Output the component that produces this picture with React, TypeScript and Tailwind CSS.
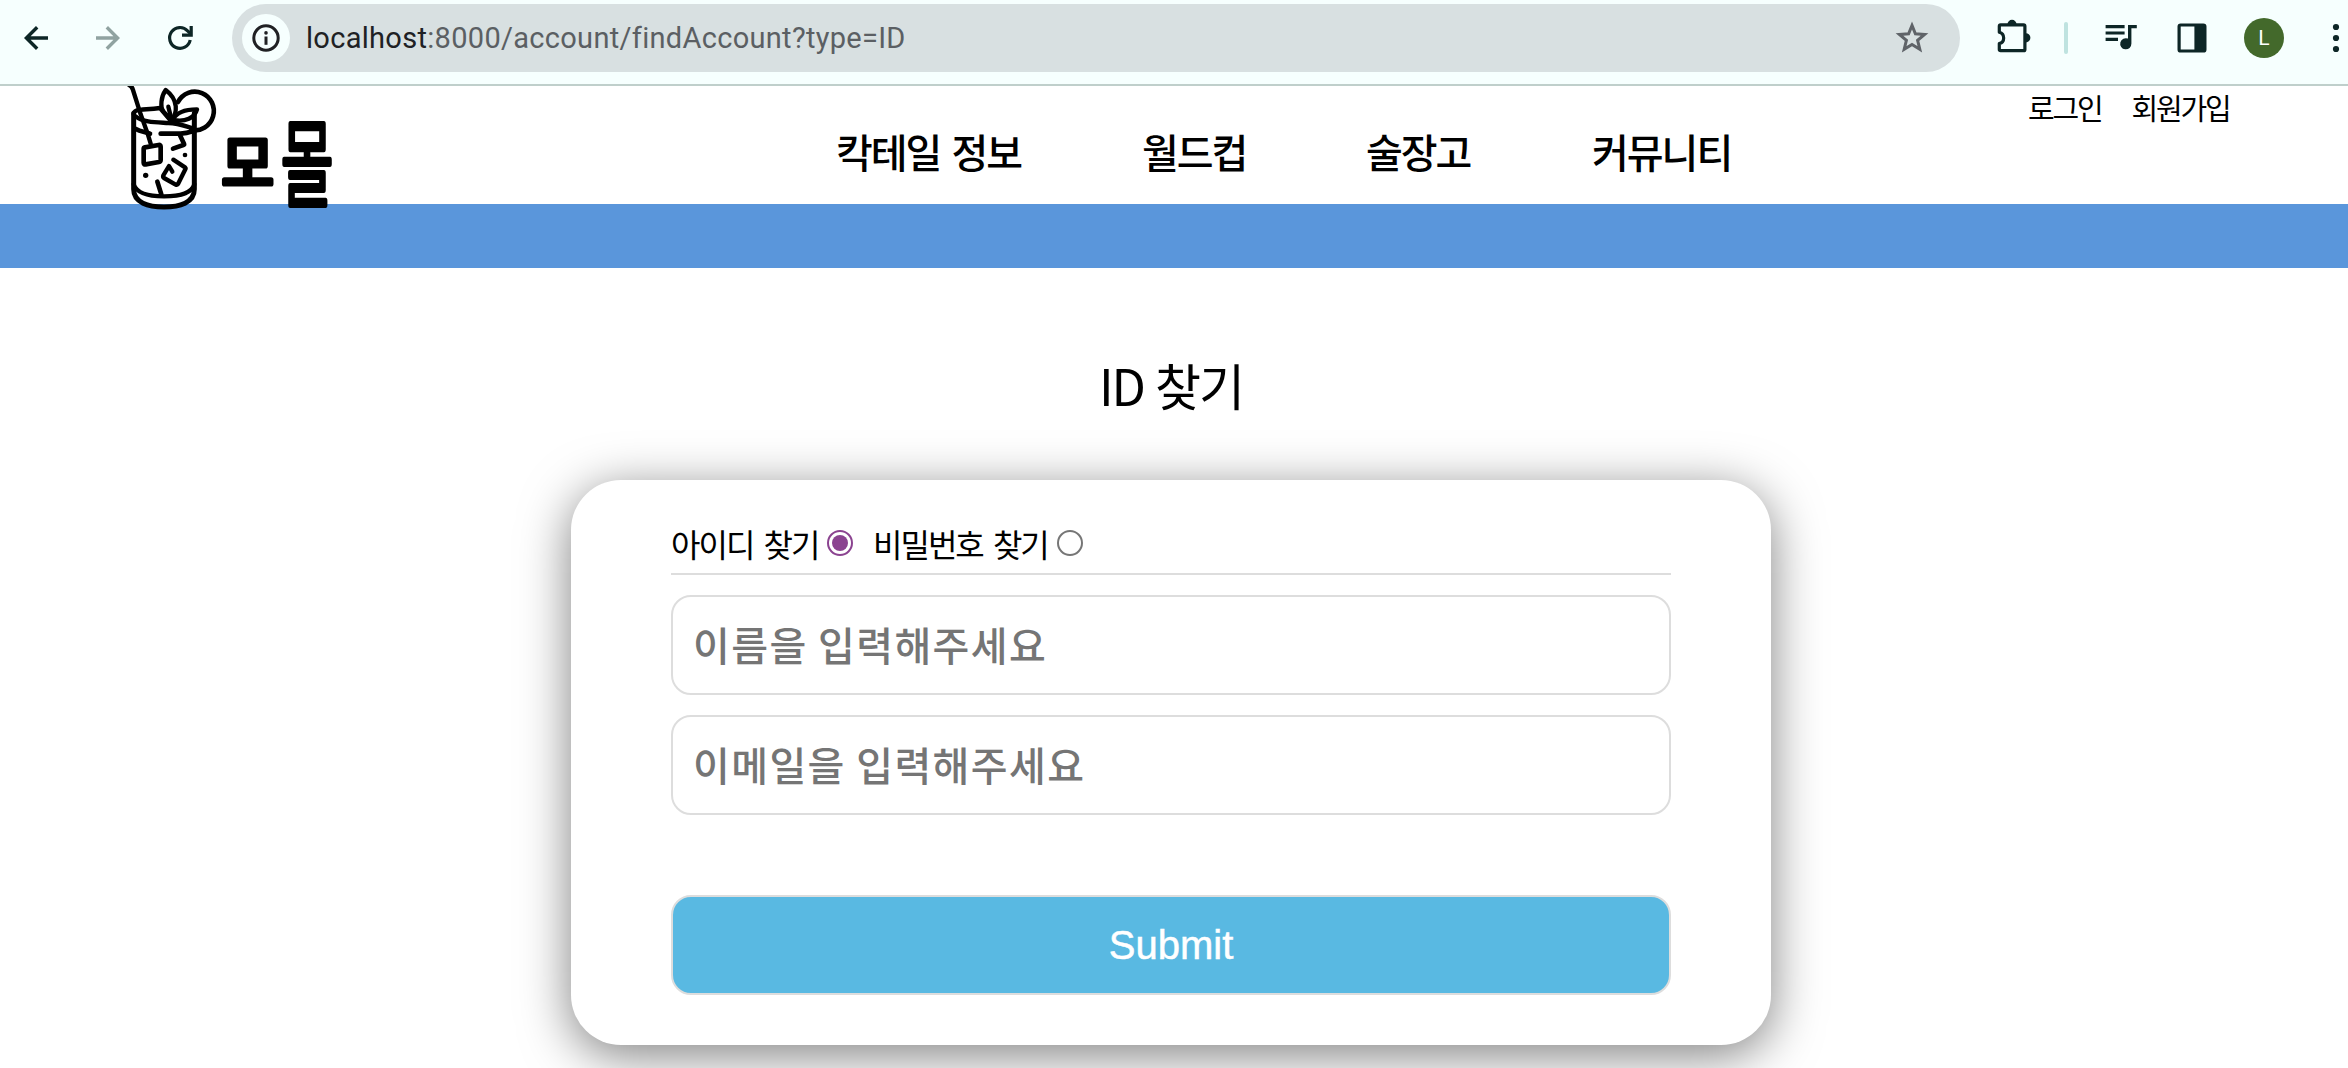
import React, { useState } from "react";

const kr = "font-['Noto_Sans_CJK_KR',sans-serif]";

function BrowserBar() {
  return (
    <div className="flex h-[86px] items-start border-b-2 border-[#bfcfcb] bg-[#f6fffe] pt-1 text-[#0d2626]">
      <div className="flex h-[68px] w-[232px] shrink-0 items-center pl-5">
        <svg className="mr-10 size-8" viewBox="0 0 32 32" fill="none" stroke="currentColor" strokeWidth="3.4">
          <path d="M28 16H7M17.2 5.2 6.4 16l10.8 10.8" />
        </svg>
        <svg className="mr-10 size-8 text-[#90a3a1]" viewBox="0 0 32 32" fill="none" stroke="currentColor" strokeWidth="3.4">
          <path d="M4 16h21M14.8 5.2 25.6 16 14.8 26.8" />
        </svg>
        <svg className="size-8" viewBox="0 0 32 32" fill="none" stroke="currentColor" strokeWidth="3.2">
          <path d="M26.2 18A10.4 10.4 0 1 1 23.6 8.8L27 12.2" />
          <path d="M27.2 4v9.2H18" />
        </svg>
      </div>
      <div className="flex h-[68px] w-[1728px] shrink-0 items-center rounded-full bg-[#d8e0e1] pl-[10px] pr-[30px]">
        <div className="flex size-12 items-center justify-center rounded-full bg-[#f6fffe] text-[#202124]">
          <svg className="size-7" viewBox="0 0 28 28" fill="none" stroke="currentColor" strokeWidth="3">
            <circle cx="14" cy="14" r="12.2" />
            <path d="M14 12.5v8.3" />
            <circle cx="14" cy="8.9" r="1.8" fill="currentColor" stroke="none" />
          </svg>
        </div>
        <div className="ml-4 grow whitespace-nowrap font-['Roboto',sans-serif] text-[29px] leading-none tracking-[0.3px] text-[#5b5f63]">
          <span className="text-[#202124]">localhost</span>:8000/account/findAccount?type=ID
        </div>
        <svg className="size-9 text-[#5f6368]" viewBox="0 0 36 36" fill="none" stroke="currentColor" strokeWidth="3">
          <path d="M18 5.4 21.4 13.7 30.6 14.4 23.6 20.3 25.8 29.2 18 24.4 10.2 29.2 12.4 20.3 5.4 14.4 14.6 13.7Z" />
        </svg>
      </div>
      <div className="flex h-[68px] shrink-0 items-center">
        <svg className="ml-9 size-9 overflow-visible" viewBox="0 0 36 36" fill="none" stroke="currentColor" strokeWidth="3.2" strokeLinejoin="round">
          <path d="M4.6 4.9H27.6Q28.9 4.9 28.9 6.2V29.4Q28.9 30.7 27.6 30.7H4.6Q3.3 30.7 3.3 29.4V23.6A5.9 5.9 0 0 0 3.3 12.2V6.2Q3.3 4.9 4.6 4.9Z" />
          <path d="M11.4 4.4a4.6 4.6 0 0 1 9.2 0ZM29.8 13.2a4.6 4.6 0 0 1 0 9.2Z" fill="currentColor" stroke="none" />
        </svg>
        <div className="ml-8 h-8 w-1 rounded-full bg-[#bfe3e0]" />
        <svg className="ml-9 size-9" viewBox="0 0 36 36" fill="currentColor">
          <path d="M1.6 5h19v3.2h-19zM1.6 11.4h19v3.2h-19zM1.6 17.8h12.4V21H1.6z" />
          <path d="M24 5h8.8v3.2h-5.4v15.4a5.6 5.6 0 1 1-3.4-5z" />
        </svg>
        <svg className="ml-9 size-9" viewBox="0 0 36 36" fill="none" stroke="currentColor" strokeWidth="3.2">
          <rect x="3.1" y="5" width="25.8" height="26" rx="1.6" />
          <path d="M18.4 5h10v26h-10z" fill="currentColor" stroke="none" />
        </svg>
        <div className="ml-8 flex size-10 items-center justify-center rounded-full bg-[#43692b] font-['Roboto',sans-serif] text-[21px] leading-none text-white">
          L
        </div>
        <svg className="ml-9 size-8 text-[#0d2626]" viewBox="0 0 32 32" fill="currentColor">
          <circle cx="16" cy="5" r="3.1" />
          <circle cx="16" cy="16" r="3.1" />
          <circle cx="16" cy="27" r="3.1" />
        </svg>
      </div>
    </div>
  );
}

function CocktailGlass() {
  return (
    <svg className="h-[126px] w-[110px] shrink-0" viewBox="0 30 330 378" fill="none" stroke="black" strokeWidth="14" strokeLinecap="round" strokeLinejoin="round">
      <path d="M71 112V340C71 380 115 393 162 393S253 380 253 340V112" strokeWidth="15" />
      <path d="M71 325C80 352 120 361 162 361S245 352 253 325" strokeWidth="13" />
      <path d="M71 115C71 98 90 103 150 96L182 134" strokeWidth="13" />
      <path d="M78 122C100 140 140 139 175 141C205 142 225 150 246 156" strokeWidth="13" />
      <path d="M76 158C90 166 105 168 120 173" />
      <path d="M152 173H212C235 171 245 166 256 163" />
      <path d="M56 26Q66 30 69 42L92 115L112 170L122 203" strokeWidth="13" />
      <path d="M167 42C153 62 150 92 160 106L184 133C202 112 207 72 167 42Z" strokeWidth="13" />
      <path d="M175 92L184 128" strokeWidth="13" />
      <path d="M188 131C200 108 232 100 261 100C254 126 226 139 190 132Z" strokeWidth="13" />
      <path d="M204 78A57 58 0 1 1 244 162" strokeWidth="14" />
      <path d="M105 214Q101 215 101 219V260Q101 266 107 265L147 258Q152 257 152 252V212Q152 206 146 207Z" strokeWidth="14" />
      <path d="M210 178 222 203Q223 206 220 207L189 218" />
      <path d="M190 251 225 274Q228 277 226 280L204 324Q201 328 197 326L162 306Q158 303 160 298L177 270 187 287" strokeWidth="13" />
      <path d="M142 317 154 355" />
      <circle cx="107" cy="298" r="8" fill="black" stroke="none" />
      <circle cx="225" cy="237" r="7" fill="black" stroke="none" />
    </svg>
  );
}

function Wordmark() {
  return (
    <svg className="h-[126px] w-[120px] shrink-0" viewBox="220 86 120 126" fill="black" stroke="black" strokeLinejoin="round">
      <text transform="translate(221.5 186) scale(1 1.06)" fontSize="57" fontWeight="400" strokeWidth="5" vectorEffect="non-scaling-stroke">모</text>
      <text transform="translate(281 199) scale(1 1.66)" fontSize="57" fontWeight="300" strokeWidth="5" vectorEffect="non-scaling-stroke">몰</text>
    </svg>
  );
}

function Header() {
  return (
    <header className={`flex h-[118px] items-start whitespace-nowrap text-black ${kr}`}>
      <a className="flex w-[836px] shrink-0 pl-[110px]">
        <CocktailGlass />
        <Wordmark />
      </a>
      <nav className="flex pt-[35px] text-[40px] font-medium leading-[60px] tracking-[-2px]">
        <a className="w-[306px] [word-spacing:4px]">칵테일 정보</a>
        <a className="w-[224px]">월드컵</a>
        <a className="w-[226px]">술장고</a>
        <a className="w-[436px]">커뮤니티</a>
      </nav>
      <div className="flex gap-[30px] text-[29px] leading-[43px] tracking-[-2.2px]">
        <a>로그인</a>
        <a>회원가입</a>
      </div>
    </header>
  );
}

function Radio({ checked, onSelect }: { checked: boolean; onSelect: () => void }) {
  return (
    <button
      type="button"
      role="radio"
      aria-checked={checked}
      onClick={onSelect}
      className={`flex size-[26px] items-center justify-center rounded-full border-2 ${checked ? "border-[#8b4390]" : "border-[#767676]"}`}
    >
      {checked && <span className="size-4 rounded-full bg-[#8b4390]" />}
    </button>
  );
}

export default function App() {
  const [type, setType] = useState("ID");
  const input =
    "block h-[100px] w-full rounded-[20px] border-2 border-[#dddddd] bg-white px-5 pb-[3px] text-[40px] font-medium tracking-[1.4px] text-black outline-none placeholder:text-[#757575]";
  return (
    <div className="h-[1068px] w-[2348px] overflow-hidden bg-white">
      <BrowserBar />
      <Header />
      <div className="h-16 bg-[#5a96db]" />
      <main className={`flex w-[2342px] flex-col items-center text-black ${kr}`}>
        <h1 className="mt-[79px] text-[50px] leading-[74px] tracking-[-2px] [word-spacing:2px]">ID 찾기</h1>
        <form className="mt-[59px] h-[565px] w-[1200px] rounded-[50px] bg-white px-[100px] pt-[40px] shadow-[0_10px_50px_rgba(0,0,0,0.5)]">
          <div className="flex h-[55px] items-center border-b-2 border-[#dddddd] pb-[7px] text-[32px] tracking-[-2px] [word-spacing:5px]">
            <span className="w-[156px]">아이디 찾기</span>
            <Radio checked={type === "ID"} onSelect={() => setType("ID")} />
            <span className="ml-5 w-[184px]">비밀번호 찾기</span>
            <Radio checked={type === "PW"} onSelect={() => setType("PW")} />
          </div>
          <input className={`${input} mt-5`} placeholder="이름을 입력해주세요" />
          <input className={`${input} mt-5`} placeholder="이메일을 입력해주세요" />
          <button type="button" className="mt-20 block h-[100px] w-full rounded-[20px] border-2 border-[#dddddd] bg-[#59b9e2] font-['Liberation_Sans',sans-serif] text-[40px] text-white [-webkit-text-stroke:0.5px_white]">
            Submit
          </button>
        </form>
      </main>
    </div>
  );
}
